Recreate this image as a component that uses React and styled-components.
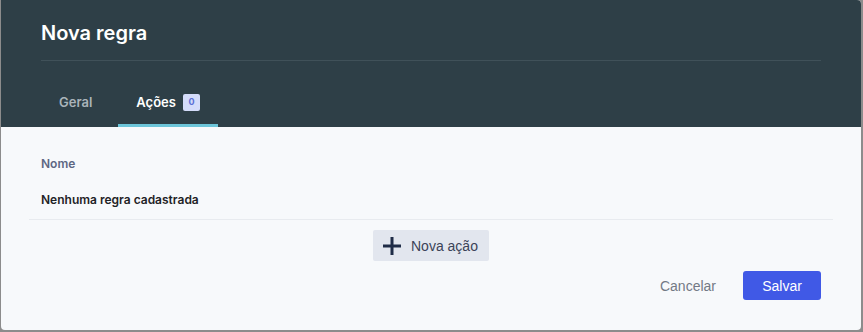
import styled, { createGlobalStyle } from "styled-components";

const GlobalStyle = createGlobalStyle`
  html, body {
    margin: 0;
    padding: 0;
    background: #8c8c8c;
  }
  * {
    box-sizing: border-box;
  }
`;

const Page = styled.div`
  width: 863px;
  height: 332px;
  padding: 0 2px 2px 1px;
  overflow: hidden;
`;

const Dialog = styled.div`
  width: 860px;
  height: 330px;
  background: #f7f9fb;
  border-radius: 0 4px 4px 4px;
  overflow: hidden;
  display: flex;
  flex-direction: column;
`;

const Header = styled.div`
  background: #2e3f47;
  padding: 20px 40px 0 40px;
`;

const Title = styled.h2`
  margin: 0;
  font-family: Inter, "Noto Sans", sans-serif;
  font-size: 20px;
  line-height: 27px;
  font-weight: 600;
  color: #ffffff;
`;

const Divider = styled.div`
  height: 1px;
  margin-top: 13px;
  background: #405159;
`;

const Tabs = styled.div`
  display: flex;
  gap: 8px;
  margin-top: 22px;
`;

const Tab = styled.div`
  display: flex;
  align-items: center;
  gap: 7px;
  padding: 9px 18px 12px 18px;
  border-bottom: 3px solid ${(p) => (p.$active ? "#6cc5d9" : "transparent")};
  font-family: Inter, "Noto Sans", sans-serif;
  font-size: 13px;
  line-height: 20px;
  font-weight: 600;
  color: ${(p) => (p.$active ? "#ffffff" : "#aab4ba")};
`;

const Badge = styled.span`
  display: inline-flex;
  align-items: center;
  justify-content: center;
  width: 17px;
  height: 17px;
  border-radius: 2px;
  background: #d4dcfa;
  color: #5b6fd6;
  font-size: 9px;
  font-weight: 700;
`;

const Body = styled.div`
  flex: 1;
  padding: 20px 28px 0 28px;
  display: flex;
  flex-direction: column;
`;

const Table = styled.div`
  display: flex;
  flex-direction: column;
`;

const HeadCell = styled.div`
  height: 32px;
  display: flex;
  align-items: center;
  padding: 0 12px;
  font-family: Inter, "Noto Sans", sans-serif;
  font-size: 12px;
  font-weight: 600;
  color: #5d6783;
`;

const Row = styled.div`
  height: 41px;
  display: flex;
  align-items: center;
  padding: 1px 12px 0 12px;
  border-bottom: 1px solid #e8ebef;
  font-family: Inter, "Noto Sans", sans-serif;
  font-size: 12px;
  font-weight: 600;
  color: #1f2326;
`;

const AddWrap = styled.div`
  display: flex;
  justify-content: center;
  margin-top: 10px;
`;

const AddButton = styled.button`
  display: flex;
  align-items: center;
  gap: 10px;
  height: 31px;
  width: 116px;
  padding: 0 10px;
  border: none;
  border-radius: 2px;
  background: #e2e6ee;
  font-family: "Liberation Sans", Arial, sans-serif;
  font-size: 14px;
  color: #3b4358;
`;

const Footer = styled.div`
  display: flex;
  justify-content: flex-end;
  align-items: center;
  gap: 15px;
  margin-top: 10px;
  padding-right: 12px;
`;

const CancelButton = styled.button`
  border: none;
  background: transparent;
  padding: 0 12px;
  height: 29px;
  font-family: "Liberation Sans", Arial, sans-serif;
  font-size: 14px;
  color: #737985;
`;

const SaveButton = styled.button`
  border: none;
  border-radius: 3px;
  background: #4059e6;
  width: 78px;
  height: 29px;
  font-family: "Liberation Sans", Arial, sans-serif;
  font-size: 14px;
  color: #ffffff;
`;

function PlusIcon() {
  return (
    <svg width="18" height="18" viewBox="0 0 18 18">
      <rect x="7.5" y="0" width="3" height="18" fill="#1f2c47" />
      <rect x="0" y="7.5" width="18" height="3" fill="#1f2c47" />
    </svg>
  );
}

export default function App() {
  return (
    <>
      <GlobalStyle />
      <Page>
        <Dialog>
          <Header>
            <Title>Nova regra</Title>
            <Divider />
            <Tabs>
              <Tab>Geral</Tab>
              <Tab $active>
                Ações
                <Badge>0</Badge>
              </Tab>
            </Tabs>
          </Header>
          <Body>
            <Table>
              <HeadCell>Nome</HeadCell>
              <Row>Nenhuma regra cadastrada</Row>
            </Table>
            <AddWrap>
              <AddButton>
                <PlusIcon />
                Nova ação
              </AddButton>
            </AddWrap>
            <Footer>
              <CancelButton>Cancelar</CancelButton>
              <SaveButton>Salvar</SaveButton>
            </Footer>
          </Body>
        </Dialog>
      </Page>
    </>
  );
}
